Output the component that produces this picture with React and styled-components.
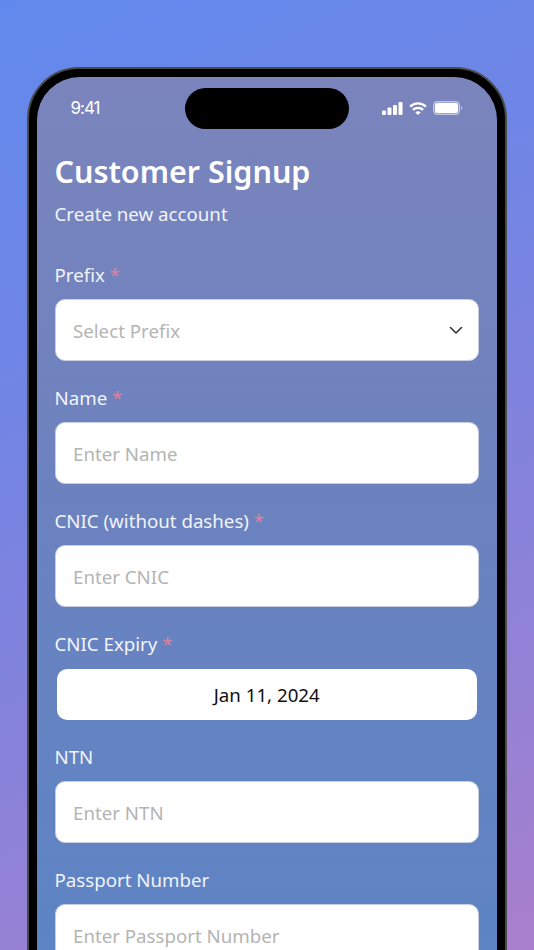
import React from 'react';
import styled, { createGlobalStyle } from 'styled-components';

const GlobalStyle = createGlobalStyle`
  html, body {
    margin: 0;
    padding: 0;
    height: 950px;
    overflow: hidden;
  }
  * { box-sizing: border-box; }
`;

const Page = styled.main`
  width: 534px;
  height: 950px;
  padding-top: 67px;
  overflow: hidden;
  display: flex;
  justify-content: center;
  background: linear-gradient(155deg, #6189ed 0%, #7285e4 35%, #8d82d8 70%, #a97fcc 100%);
  font-family: 'Noto Sans', sans-serif;
`;

const Phone = styled.div`
  width: 480px;
  height: 960px;
  flex-shrink: 0;
  padding: 8px 8px 0;
  border: 2px solid #4a4a4c;
  border-radius: 52px;
  background: #000;
`;

const Screen = styled.div`
  position: relative;
  height: 100%;
  padding: 0 18px 0 17.5px;
  border-radius: 43px;
  background: linear-gradient(180deg, #7b84bc 0%, #6d82bf 40%, #5b84c5 100%);
`;

const Island = styled.div`
  position: absolute;
  top: 11px;
  left: 148px;
  width: 164px;
  height: 41px;
  border-radius: 21px;
  background: #000;
`;

const StatusBar = styled.div`
  height: 74px;
  padding: 20px 16px 0;
  display: flex;
  justify-content: space-between;
  align-items: flex-start;
  color: #fff;
`;

const Clock = styled.span`
  font-family: 'Inter', sans-serif;
  font-size: 17px;
  font-weight: 400;
  letter-spacing: -1px;
  line-height: 22px;
`;

const StatusIcons = styled.div`
  display: flex;
  align-items: center;
  gap: 6px;
  margin-top: 4px;
`;

const Title = styled.h1`
  margin: 0;
  font-size: 30.5px;
  line-height: 41px;
  font-weight: 600;
  color: #fff;
`;

const Subtitle = styled.p`
  margin: 0 0 35px;
  padding-top: 9px;
  font-size: 18.7px;
  line-height: 26px;
  color: #f1f3fb;
`;

const Field = styled.div`
  margin-bottom: 24px;
`;

const Label = styled.label`
  display: block;
  margin-bottom: ${p => (p.$date ? 12 : 11)}px;
  font-size: 18.7px;
  line-height: 26px;
  color: #f1f4fb;
`;

const Star = styled.span`
  color: #e0809f;
`;

const InputBox = styled.div`
  height: 62px;
  padding: 0 15.5px 0 17.5px;
  display: flex;
  align-items: center;
  justify-content: space-between;
  border: 1px solid #c9cee2;
  border-radius: 10px;
  background: #fff;
  font-size: 18.7px;
  color: #b4b4b4;
`;

const DateBox = styled.div`
  height: 51px;
  margin: 0 2px;
  display: flex;
  align-items: center;
  justify-content: center;
  border-radius: 10px;
  background: #fff;
  font-size: 18.7px;
  color: #111;
`;

const Chevron = () => (
  <svg width="14" height="9" viewBox="0 0 14 9" fill="none">
    <path d="M1.5 1.5 7 7l5.5-5.5" stroke="#333" strokeWidth="1.6" strokeLinecap="round" strokeLinejoin="round" />
  </svg>
);

const Signal = () => (
  <svg width="21" height="13" viewBox="0 0 21 13" fill="#fff">
    <rect x="0" y="8.5" width="4" height="4.5" rx="1" />
    <rect x="5.5" y="5.5" width="4" height="7.5" rx="1" />
    <rect x="11" y="3" width="4" height="10" rx="1" />
    <rect x="16.5" y="0" width="4" height="13" rx="1" />
  </svg>
);

const Wifi = () => (
  <svg width="18" height="13" viewBox="0 0 19 14" fill="none" stroke="#fff" strokeWidth="2.6">
    <path d="M1 5a12 12 0 0 1 17 0" />
    <path d="M4 8.5a8 8 0 0 1 11 0" />
    <path d="M9.5 14 6.6 11.3a4.2 4.2 0 0 1 5.8 0Z" fill="#fff" stroke="none" />
  </svg>
);

const Battery = () => (
  <svg width="30" height="14" viewBox="0 0 30 14" fill="none">
    <rect x="0.7" y="0.7" width="25.6" height="12.6" rx="3.5" stroke="#fff" strokeOpacity="0.55" strokeWidth="1.4" />
    <rect x="2" y="2" width="23" height="10" rx="2" fill="#fff" />
    <path d="M27.8 5v4c.9-.3 1.5-1.1 1.5-2s-.6-1.7-1.5-2Z" fill="#fff" fillOpacity="0.5" />
  </svg>
);

const fields = [
  { label: 'Prefix', required: true, placeholder: 'Select Prefix', select: true },
  { label: 'Name', required: true, placeholder: 'Enter Name' },
  { label: 'CNIC (without dashes)', required: true, placeholder: 'Enter CNIC' },
  { label: 'CNIC Expiry', required: true, date: 'Jan 11, 2024' },
  { label: 'NTN', placeholder: 'Enter NTN' },
  { label: 'Passport Number', placeholder: 'Enter Passport Number' },
];

export default function App() {
  return (
    <Page>
      <GlobalStyle />
      <Phone>
        <Screen>
          <Island />
          <StatusBar>
            <Clock>9:41</Clock>
            <StatusIcons>
              <Signal />
              <Wifi />
              <Battery />
            </StatusIcons>
          </StatusBar>
          <Title>Customer Signup</Title>
          <Subtitle>Create new account</Subtitle>
          {fields.map(f => (
            <Field key={f.label}>
              <Label $date={!!f.date}>
                {f.label}{f.required && <Star> *</Star>}
              </Label>
              {f.date ? (
                <DateBox>{f.date}</DateBox>
              ) : (
                <InputBox>
                  {f.placeholder}
                  {f.select && <Chevron />}
                </InputBox>
              )}
            </Field>
          ))}
        </Screen>
      </Phone>
    </Page>
  );
}
